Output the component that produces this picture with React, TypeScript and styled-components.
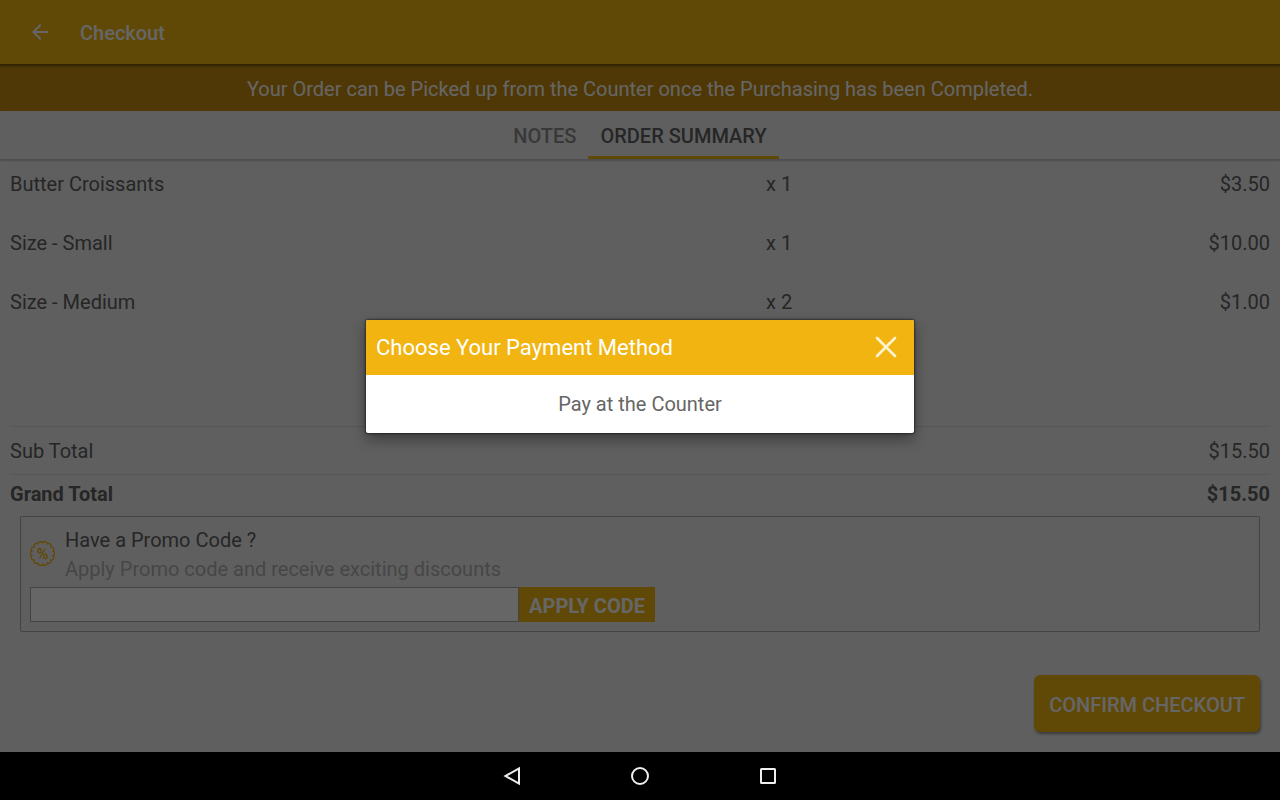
import React from 'react';
import styled, { createGlobalStyle } from 'styled-components';

const GlobalStyle = createGlobalStyle`
  *, *::before, *::after { box-sizing: border-box; }
  body {
    margin: 0;
    background: #000;
    font-family: Roboto, "Liberation Sans", sans-serif;
    font-size: 20px;
    line-height: 24px;
  }
  button, input { font: inherit; border: 0; padding: 0; margin: 0; }
  button { cursor: pointer; background: none; }
`;

const gold = '#f1b411';
const ink = '#606060';

const Device = styled.div`
  min-height: 100vh;
  display: flex;
  flex-direction: column;
`;

const Stage = styled.div`
  position: relative;
  flex: 1;
  display: flex;
  flex-direction: column;
  background: #eeeeee;
  color: ${ink};
`;

const AppBar = styled.header`
  height: 64px;
  display: flex;
  align-items: center;
  gap: 28px;
  padding: 0 28px;
  background: ${gold};
  color: #fff;
`;

const BackButton = styled.button`
  width: 24px;
  height: 24px;
  color: #fff;
`;

const Title = styled.h1`
  margin: 0;
  padding-top: 2px;
  font-size: 20px;
  font-weight: 500;
`;

const Banner = styled.p`
  margin: 0;
  padding: 13px 16px 10px;
  text-align: center;
  color: #fff;
  background: #c58c0d;
  box-shadow: inset 0 4px 3px -2px rgba(0, 0, 0, 0.4);
`;

const Tabs = styled.nav`
  height: 48px;
  display: flex;
  justify-content: center;
  box-shadow: 0 2px 2px rgba(0, 0, 0, 0.2);
`;

const Tab = styled.button<{ $active?: boolean }>`
  padding: 4px 12px 0;
  border-bottom: 3px solid ${(p) => (p.$active ? gold : 'transparent')};
  font-weight: 500;
  color: ${(p) => (p.$active ? ink : '#8c8c8c')};
`;

const Items = styled.div`
  flex: 1;
  padding: 0 10px;
`;

const ItemTable = styled.table`
  width: 100%;
  table-layout: fixed;
  border-collapse: collapse;
`;

const Cell = styled.td<{ $width?: string; $end?: boolean }>`
  width: ${(p) => p.$width ?? 'auto'};
  padding: 13px 0 22px;
  text-align: ${(p) => (p.$end ? 'right' : 'left')};
`;

const Totals = styled.dl`
  margin: 0 10px;
`;

const TotalRow = styled.div<{ $strong?: boolean }>`
  display: flex;
  justify-content: space-between;
  padding: ${(p) => (p.$strong ? '7px 0 10px' : '12px 0 11px')};
  border-top: 1px solid #dadada;
  font-weight: ${(p) => (p.$strong ? 700 : 400)};

  dt, dd { margin: 0; }
`;

const PromoCard = styled.section`
  margin: 0 20px;
  padding: 9px;
  border: 1px solid #a8a8a8;
  border-radius: 2px;
`;

const PromoIntro = styled.div`
  display: flex;
  align-items: flex-start;
  gap: 10px;
  padding-bottom: 3px;

  > svg { margin-top: 15px; }
`;

const PromoLine = styled.p<{ $muted?: boolean }>`
  margin: 0;
  line-height: 29px;
  color: ${(p) => (p.$muted ? '#b0b0b0' : ink)};
`;

const PromoForm = styled.form`
  display: flex;
  width: 100%;
  max-width: 625px;
  height: 35px;
`;

const PromoInput = styled.input`
  flex: 1;
  min-width: 0;
  padding: 0 8px;
  border: 1px solid #a8a8a8;
  background: #fff;
`;

const ApplyButton = styled.button`
  padding: 2px 10px 0;
  background: ${gold};
  color: #fff;
  font-weight: 700;
`;

const Actions = styled.div`
  display: flex;
  justify-content: flex-end;
  padding: 43px 20px 20px;
`;

const ConfirmButton = styled.button`
  height: 57px;
  padding: 2px 15px 0;
  border-radius: 6px;
  background: ${gold};
  color: #fff;
  font-weight: 500;
  box-shadow: 1px 2px 3px rgba(0, 0, 0, 0.4);
`;

const Scrim = styled.div`
  position: absolute;
  inset: 0;
  display: flex;
  align-items: center;
  justify-content: center;
  padding: 16px;
  background: rgba(0, 0, 0, 0.6);
`;

const Dialog = styled.div`
  width: 100%;
  max-width: 548px;
  border-radius: 2px;
  overflow: hidden;
  background: #fff;
  box-shadow: 0 0 2px 1px rgba(0, 0, 0, 0.45), 0 6px 14px rgba(0, 0, 0, 0.4);
`;

const DialogHeader = styled.div`
  height: 55px;
  display: flex;
  align-items: center;
  justify-content: space-between;
  padding: 0 16px 0 10px;
  background: ${gold};
  color: #fff;
`;

const DialogTitle = styled.h2`
  margin: 0;
  padding-top: 2px;
  font-size: 22px;
  font-weight: 400;
`;

const CloseButton = styled.button`
  width: 24px;
  height: 24px;
  color: #fff3cf;
`;

const MethodButton = styled.button`
  display: block;
  width: 100%;
  height: 58px;
  color: #666;
`;

const SystemBar = styled.footer`
  height: 48px;
  display: flex;
  justify-content: center;
  gap: 80px;
  background: #000;
`;

const SystemButton = styled.button`
  width: 48px;
  height: 48px;
  display: flex;
  align-items: center;
  justify-content: center;
`;

const Icon = styled.svg`
  display: block;
  flex: none;
  fill: none;
  stroke: currentColor;
`;

// Scalloped outline of the discount seal
const LOBES = 14;
const sealPoint = (i: number) => {
  const a = (i / LOBES) * Math.PI * 2 - Math.PI / 2;
  return `${(12.5 + 10.7 * Math.cos(a)).toFixed(2)} ${(12.5 + 10.7 * Math.sin(a)).toFixed(2)}`;
};
const sealPath =
  `M${sealPoint(0)}` +
  Array.from({ length: LOBES }, (_, i) => `A2.5 2.5 0 0 1 ${sealPoint(i + 1)}`).join('') +
  'Z';

const items = [
  { name: 'Butter Croissants', qty: 1, price: '$3.50' },
  { name: 'Size - Small', qty: 1, price: '$10.00' },
  { name: 'Size - Medium', qty: 2, price: '$1.00' },
];

export default function App() {
  return (
    <>
      <GlobalStyle />
      <Device>
        <Stage>
          <AppBar>
            <BackButton type="button" aria-label="Back">
              <Icon width="24" height="24" viewBox="0 0 24 24" strokeWidth="2">
                <path d="M20 12H5.500M12.700 4.700 5.400 12l7.300 7.300" />
              </Icon>
            </BackButton>
            <Title>Checkout</Title>
          </AppBar>
          <Banner>
            Your Order can be Picked up from the Counter once the Purchasing has been Completed.
          </Banner>
          <Tabs>
            <Tab type="button">NOTES</Tab>
            <Tab type="button" $active>ORDER SUMMARY</Tab>
          </Tabs>
          <Items>
            <ItemTable>
              <tbody>
                {items.map((item) => (
                  <tr key={item.name}>
                    <Cell $width="60%">{item.name}</Cell>
                    <Cell>x {item.qty}</Cell>
                    <Cell $end>{item.price}</Cell>
                  </tr>
                ))}
              </tbody>
            </ItemTable>
          </Items>
          <Totals>
            <TotalRow>
              <dt>Sub Total</dt>
              <dd>$15.50</dd>
            </TotalRow>
            <TotalRow $strong>
              <dt>Grand Total</dt>
              <dd>$15.50</dd>
            </TotalRow>
          </Totals>
          <PromoCard>
            <PromoIntro>
              <Icon width="25" height="25" viewBox="0 0 25 25" color={gold} strokeWidth="1.300">
                <path d={sealPath} />
                <ellipse cx="9.600" cy="9.700" rx="1.700" ry="2.200" />
                <ellipse cx="15.400" cy="15.300" rx="1.700" ry="2.200" />
                <path d="M15.400 7.500 9.600 17.500" />
              </Icon>
              <div>
                <PromoLine as="label" htmlFor="promo">Have a Promo Code ?</PromoLine>
                <PromoLine $muted>Apply Promo code and receive exciting discounts</PromoLine>
              </div>
            </PromoIntro>
            <PromoForm onSubmit={(e) => e.preventDefault()}>
              <PromoInput id="promo" type="text" />
              <ApplyButton type="submit">APPLY CODE</ApplyButton>
            </PromoForm>
          </PromoCard>
          <Actions>
            <ConfirmButton type="button">CONFIRM CHECKOUT</ConfirmButton>
          </Actions>
          <Scrim>
            <Dialog role="dialog" aria-modal="true" aria-labelledby="payment-title">
              <DialogHeader>
                <DialogTitle id="payment-title">Choose Your Payment Method</DialogTitle>
                <CloseButton type="button" aria-label="Close">
                  <Icon width="24" height="24" viewBox="0 0 24 24" strokeWidth="2.700" strokeLinecap="round">
                    <path d="M3 3l18 18M21 3 3 21" />
                  </Icon>
                </CloseButton>
              </DialogHeader>
              <MethodButton type="button">Pay at the Counter</MethodButton>
            </Dialog>
          </Scrim>
        </Stage>
        <SystemBar>
          <SystemButton type="button" aria-label="System back">
            <Icon width="20" height="20" viewBox="0 0 20 20" color="#eee" strokeWidth="2">
              <path d="M17 2.500v15L3.500 10Z" />
            </Icon>
          </SystemButton>
          <SystemButton type="button" aria-label="Home">
            <Icon width="20" height="20" viewBox="0 0 20 20" color="#eee" strokeWidth="2">
              <circle cx="10" cy="10" r="8" />
            </Icon>
          </SystemButton>
          <SystemButton type="button" aria-label="Recent apps">
            <Icon width="20" height="20" viewBox="0 0 20 20" color="#eee" strokeWidth="2">
              <rect x="3" y="3" width="14" height="14" rx="0.500" />
            </Icon>
          </SystemButton>
        </SystemBar>
      </Device>
    </>
  );
}
